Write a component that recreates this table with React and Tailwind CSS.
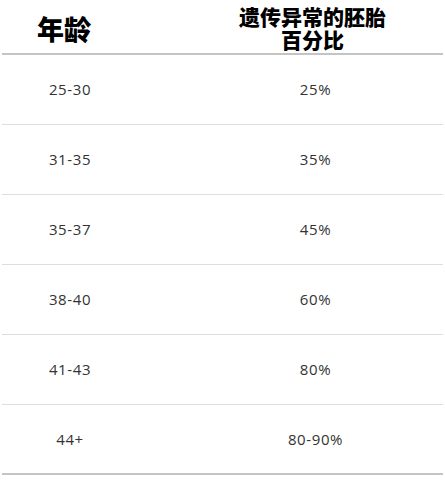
import React from 'react';

const rows = [
    ['25-30', '25%'],
    ['31-35', '35%'],
    ['35-37', '45%'],
    ['38-40', '60%'],
    ['41-43', '80%'],
    ['44+', '80-90%'],
];

export default function App() {
    return (
        <div className="w-[445px] h-[497px] bg-white px-[2px] font-['Open_Sans',sans-serif]">
            {/* Header */}
            <div className="flex h-[55px] border-b-2 border-[#c4c4c4] font-['Noto_Sans_CJK_SC',serif] text-black">
                <div className="w-[136px] flex items-center justify-center pr-[12px] pt-[4px]">
                    <span className="text-[27px] font-black leading-none">年龄</span>
                </div>
                <div className="flex-1 flex items-center justify-center pl-[44px] pt-[2px]">
                    <p className="text-[21px] font-black leading-[23px] text-center">
                        遗传异常的胚胎
                        <br />
                        百分比
                    </p>
                </div>
            </div>

            {/* Rows */}
            {rows.map(([age, pct], i) => (
                <div
                    key={age}
                    className={
                        i === rows.length - 1
                            ? 'flex h-[70px] items-center border-b-2 border-[#c4c4c4] text-[15px] tracking-[0.6px] text-[#333]'
                            : 'flex h-[70px] items-center border-b border-[#dedede] text-[15px] tracking-[0.6px] text-[#333]'
                    }
                >
                    <div className="w-[136px] text-center">{age}</div>
                    <div className="flex-1 text-center pl-[50px]">{pct}</div>
                </div>
            ))}
        </div>
    );
}
